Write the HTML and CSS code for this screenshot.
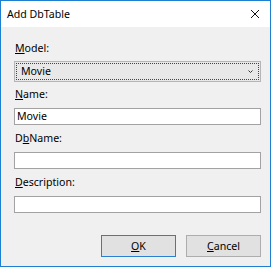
FILE: index.html
```html
<!DOCTYPE html>
<html>
<head>
<meta charset="utf-8">
<link rel="stylesheet" href="styles.css">
</head>
<body>
<div class="window">
  <div class="titlebar">
    <span class="title">Add DbTable</span>
    <svg class="close" width="10" height="10" viewBox="0 0 10 10"><path d="M1 1L9 9M9 1L1 9" stroke="#111" stroke-width="1" fill="none"/></svg>
  </div>
  <div class="client">
    <div class="field first">
      <label class="lbl"><u>M</u>odel:</label>
      <div class="combo">
        <div class="focus">
          <span class="val">Movie</span>
          <svg class="chev" width="5" height="3" viewBox="0 0 5 3"><path d="M0.5 0.5L2.5 2.5L4.5 0.5" stroke="#333" stroke-width="1" fill="none"/></svg>
        </div>
      </div>
    </div>
    <div class="field">
      <label class="lbl"><u>N</u>ame:</label>
      <div class="box">Movie</div>
    </div>
    <div class="field">
      <label class="lbl">D<u>b</u>Name:</label>
      <div class="box"></div>
    </div>
    <div class="field">
      <label class="lbl"><u>D</u>escription:</label>
      <div class="box"></div>
    </div>
    <div class="buttons">
      <div class="btn default"><span><u>O</u>K</span></div>
      <div class="btn"><span><u>C</u>ancel</span></div>
    </div>
  </div>
</div>
</body>
</html>
```
FILE: styles.css
```css
html, body {
  margin: 0;
  padding: 0;
  background: #ffffff;
}
body {
  font-family: "Noto Sans", "Open Sans", sans-serif;
  font-size: 10.6px;
  color: #000;
}
.window {
  width: 271px;
  height: 267px;
  box-sizing: border-box;
  border: 1px solid #1c7fd1;
  display: flex;
  flex-direction: column;
  background: #f0f0f0;
}
.titlebar {
  height: 26px;
  background: #ffffff;
  display: flex;
  align-items: center;
  justify-content: space-between;
  padding-left: 6px;
  padding-right: 10px;
}
.title {
  line-height: 15px;
}
.close {
  display: block;
}
.client {
  flex: 1;
  display: flex;
  flex-direction: column;
  padding: 14px 9px 9px 13px;
}
.field {
  display: flex;
  flex-direction: column;
  margin-bottom: 6px;
}
.field.first {
  margin-bottom: 5px;
}
.lbl {
  line-height: 15px;
  margin-bottom: 6px;
  padding-left: 1px;
}
.field.first .lbl {
  margin-bottom: 5px;
}
.lbl u, .btn u {
  text-underline-offset: 1px;
}
.combo {
  height: 21px;
  box-sizing: border-box;
  border: 1px solid #b5b5b5;
  background: #e8e8e8;
  padding: 1px;
  display: flex;
}
.focus {
  flex: 1;
  border: 1px dotted #444;
  display: flex;
  align-items: center;
  justify-content: space-between;
  padding: 0 5px 0 4px;
}
.val {
  line-height: 15px;
}
.chev {
  display: block;
}
.box {
  height: 17px;
  box-sizing: border-box;
  border: 1px solid #a2a2a2;
  background: #fff;
  padding-left: 2px;
  line-height: 15px;
}
.buttons {
  margin-top: auto;
  display: flex;
  justify-content: flex-end;
  gap: 10px;
}
.btn {
  width: 75px;
  height: 22px;
  box-sizing: border-box;
  border: 1px solid #adadad;
  background: #e1e1e1;
  display: flex;
  align-items: center;
  justify-content: center;
  line-height: 15px;
}
.btn.default {
  border-color: #2a7fd0;
}
```
